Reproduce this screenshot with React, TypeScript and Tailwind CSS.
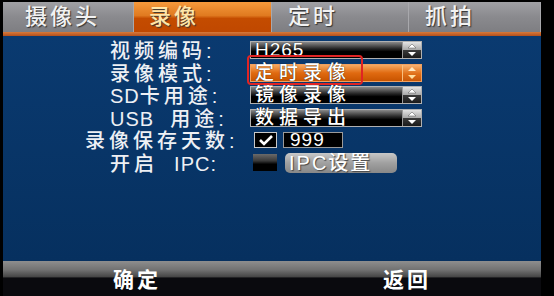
const CJK = { fontFamily: '"Liberation Sans", "Noto Sans CJK SC", sans-serif' };

const tabs = [
  { label: "摄像头", w: "w-[131px]", pl: "pl-[22px]", active: false },
  { label: "录像", w: "w-[138px]", pl: "pl-[15px]", active: true },
  { label: "定时", w: "w-[137px]", pl: "pl-[16px]", active: false },
  { label: "抓拍", w: "w-[132px]", pl: "pl-[16px]", active: false },
];

const Arrows = ({ active }: { active?: boolean }) => (
  <div
    className={`w-[19px] h-full flex items-center justify-center border-l ${
      active
        ? "border-[#f8c080] bg-[linear-gradient(#f6b070,#e07018_55%,#c85808)]"
        : "border-[#9a9a9a] bg-[linear-gradient(#e4e4e4,#a8a8a8_50%,#3a3a3a_52%,#1a1a1a)]"
    }`}
  >
    <svg width="10" height="14" viewBox="0 0 10 14">
      <polygon points="5,1 9,5 1,5" fill={active ? "#ffe8c0" : "#ffffff"} stroke={active ? "none" : "#555"} strokeWidth="0.5" />
      <polygon points="1,9 9,9 5,13" fill={active ? "#ffe0a0" : "#ffffff"} />
    </svg>
  </div>
);

const Select = ({ value, active, latin }: { value: string; active?: boolean; latin?: boolean }) => (
  <div
    className={`w-[172px] h-[18px] flex border ${
      active
        ? "border-[#f0a060] bg-[linear-gradient(#f6a860,#e06a10_50%,#c85400)]"
        : "border-[#b0b0b0] bg-[linear-gradient(#8a8a8a,#2a2a2a_40%,#000000_60%)]"
    }`}
  >
    <div className="flex-1 flex items-center pl-[4px]">
      <span
        className={`text-[19px] leading-[18px] text-white font-medium [text-shadow:0_0_1px_#000] ${
          latin ? "tracking-[1px]" : "tracking-[5px]"
        }`}
        style={CJK}
      >
        {value}
      </span>
    </div>
    <Arrows active={active} />
  </div>
);

const Row = ({ label, pl, children }: { label: React.ReactNode; pl: string; children: React.ReactNode }) => (
  <div className="h-[22.5px] flex items-center">
    <div
      className={`w-[247px] ${pl} pt-[2px] text-[20px] leading-none tracking-[4px] font-medium text-[#eef0f4] whitespace-pre`}
      style={CJK}
    >
      {label}
    </div>
    {children}
  </div>
);

const Latin = ({ children }: { children: React.ReactNode }) => (
  <span className="tracking-[1px]">{children}</span>
);

export default function App() {
  return (
    <div className="relative w-[554px] h-[296px] bg-black flex flex-col pl-[3px] pr-[13px] pt-[2px] overflow-hidden">
      {/* Tabs */}
      <div className="flex h-[30px]">
        {tabs.map((t) => (
          <div
            key={t.label}
            className={`${t.w} ${t.pl} h-full flex items-center border-r border-[#a8a8ac] ${
              t.active
                ? "bg-[linear-gradient(#f59a3c,#e07a20_45%,#c44c00_55%,#c04800)] text-[#ffe6a8]"
                : "bg-[linear-gradient(#a0a0a4,#8a8a8e_50%,#7e7e82)] text-[#f2f2f2]"
            }`}
          >
            <span className="text-[22px] leading-none tracking-[3px] font-medium [text-shadow:1px_1px_1px_#333]" style={CJK}>
              {t.label}
            </span>
          </div>
        ))}
      </div>
      <div className="h-[4px] bg-[linear-gradient(#d87a3a,#b4501c)]" />

      {/* Form */}
      <div className="flex-1 bg-[linear-gradient(#0a3a70,#06305f)] pt-[3px]">
        <Row label="视频编码:" pl="pl-[107px]">
          <Select value="H265" latin />
        </Row>
        <Row label="录像模式:" pl="pl-[107px]">
          <Select value="定时录像" active />
        </Row>
        <Row label={<><Latin>SD</Latin>卡用途:</>} pl="pl-[107px]">
          <Select value="镜像录像" />
        </Row>
        <Row label={<><Latin>USB </Latin> 用途:</>} pl="pl-[107px]">
          <Select value="数据导出" />
        </Row>
        <Row label="录像保存天数:" pl="pl-[82px]">
          <div className="flex items-center gap-[6px] pl-[4px]">
            <div className="w-[23px] h-[16px] bg-black border border-[#c8c8c8] flex items-center justify-center">
              <svg width="16" height="12" viewBox="0 0 16 12">
                <polyline points="2,6 6,10 14,2" fill="none" stroke="#ffffff" strokeWidth="2.6" />
              </svg>
            </div>
            <div className="w-[60px] h-[16px] bg-black border border-[#9a9a9a] flex items-center pl-[6px]">
              <span className="text-[19px] leading-[16px] text-white tracking-[1px]" style={CJK}>
                999
              </span>
            </div>
          </div>
        </Row>
        <Row label={<>开启 <Latin> IPC</Latin>:</>} pl="pl-[107px]">
          <div className="flex items-center gap-[8px] pl-[3px]">
            <div className="w-[24px] h-[17px] bg-[linear-gradient(#6a6a6a,#3a3a3a_40%,#000000_60%)]" />
            <div className="w-[112px] h-[20px] rounded-[5px] bg-[linear-gradient(#c8c8c8,#a0a0a0_50%,#888888)] flex items-center pl-[4px]">
              <span className="text-[20px] leading-[20px] text-white tracking-[2px] font-medium [text-shadow:1px_1px_1px_#444]" style={CJK}>
                IPC设置
              </span>
            </div>
          </div>
        </Row>
      </div>

      {/* Bottom bar */}
      <div className="h-[35px] bg-[linear-gradient(#8e8e8e,#727272_25%,#444444_46%,#0a0a0e_48%,#0a0a0e)] flex items-center pt-[2px]">
        <span className="pl-[110px] text-[21px] leading-none text-white tracking-[3px] font-bold" style={CJK}>
          确定
        </span>
        <span className="pl-[222px] text-[21px] leading-none text-white tracking-[3px] font-bold" style={CJK}>
          返回
        </span>
      </div>

      {/* Red highlight annotation */}
      <div className="absolute left-[247px] top-[55px] w-[116px] h-[30px] border-2 border-[#e02424] rounded-[4px]" />
    </div>
  );
}
